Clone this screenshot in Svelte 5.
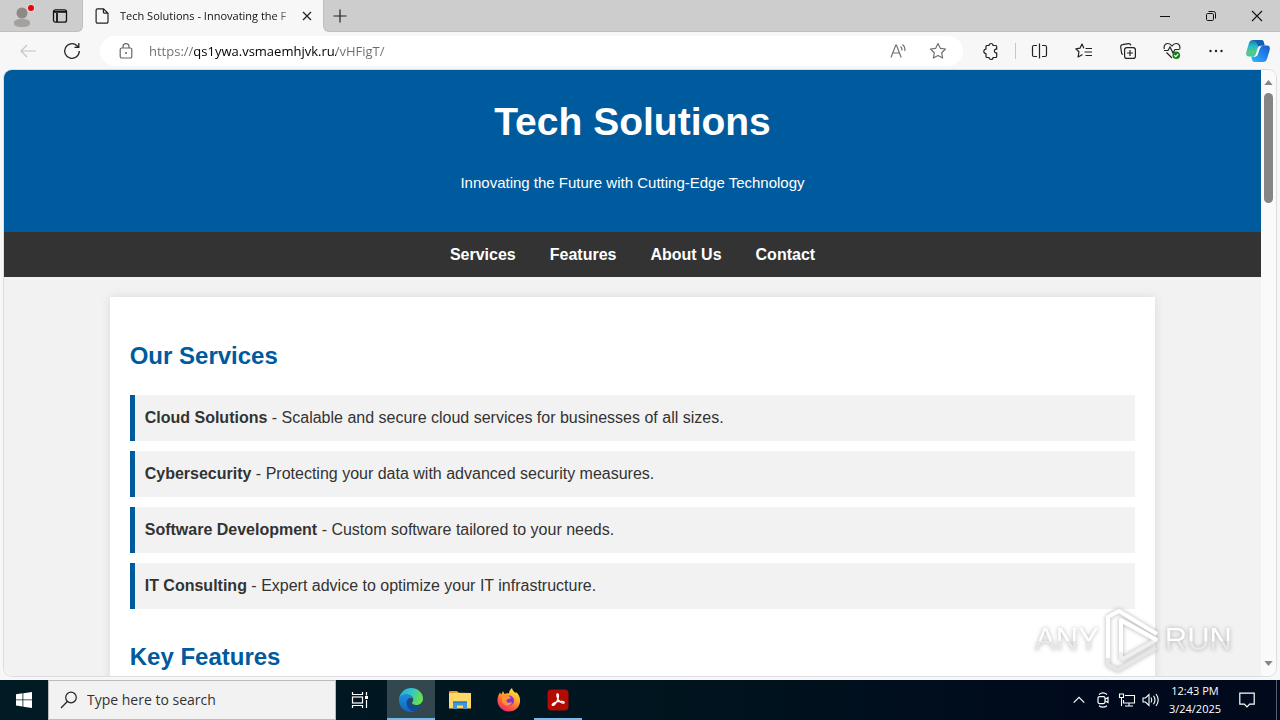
<script>
  const services = [
    { name: 'Cloud Solutions', text: 'Scalable and secure cloud services for businesses of all sizes.' },
    { name: 'Cybersecurity', text: 'Protecting your data with advanced security measures.' },
    { name: 'Software Development', text: 'Custom software tailored to your needs.' },
    { name: 'IT Consulting', text: 'Expert advice to optimize your IT infrastructure.' }
  ];
  const links = ['Services', 'Features', 'About Us', 'Contact'];
  let address = $state('https://qs1ywa.vsmaemhjvk.ru/vHFigT/');
  let query = $state('');
</script>

<div class="desktop">
  <div class="titlebar">
    <div class="lead">
      <button class="tool" aria-label="Profile">
        <svg width="24" height="24" viewBox="0 0 24 24">
          <circle cx="12" cy="9" r="5.5" fill="#8d8985" />
          <path d="M4 19c0-3 3-4 8-4s8 1 8 4-3 4-8 4-8-1-8-4z" fill="#a3a09d" />
          <circle cx="21" cy="4" r="4" fill="#e3d5d5" />
          <circle cx="21" cy="4" r="3" fill="#e0060f" />
        </svg>
      </button>
      <button class="tool" aria-label="Tab actions">
        <svg width="16" height="16" viewBox="0 0 16 16" fill="none" stroke="#111" stroke-width="1.3">
          <rect x="1.5" y="1.8" width="13" height="12.4" rx="2" />
          <path d="M1.5 3.8h13M5 5v9" stroke-width="1.8" />
        </svg>
      </button>
    </div>
    <div class="tab">
      <svg width="14" height="16" viewBox="0 0 14 16" fill="none" stroke="#222" stroke-width="1.2">
        <path d="M2.5 .8h6L13 5.2v8.6a1.4 1.4 0 0 1-1.4 1.4H2.5A1.4 1.4 0 0 1 1.1 13.8V2.2A1.4 1.4 0 0 1 2.5 .8zM8.4 .8v3.2a1.2 1.2 0 0 0 1.2 1.2H13" />
      </svg>
      <span class="tab-title">Tech Solutions - Innovating the F</span>
      <button class="close" aria-label="Close tab">
        <svg width="10" height="10" viewBox="0 0 10 10" stroke="#222" stroke-width="1.3"><path d="M1 1l8 8M9 1L1 9" /></svg>
      </button>
    </div>
    <div class="strip">
      <button class="newtab" aria-label="New tab">
        <svg width="14" height="14" viewBox="0 0 14 14" stroke="#222" stroke-width="1.2"><path d="M7 .5v13M.5 7h13" /></svg>
      </button>
      <div class="window-controls">
        <button aria-label="Minimize"><svg width="10" height="10" viewBox="0 0 10 10" stroke="#111"><path d="M0 5.5h10" /></svg></button>
        <button aria-label="Restore">
          <svg width="10" height="10" viewBox="0 0 10 10" fill="none" stroke="#111"><rect x=".5" y="2.5" width="7" height="7" rx="1.2" /><path d="M2.5 .5h5a2 2 0 0 1 2 2v5" /></svg>
        </button>
        <button aria-label="Close"><svg width="10" height="10" viewBox="0 0 10 10" stroke="#111" stroke-width="1.1"><path d="M0 0l10 10M10 0L0 10" /></svg></button>
      </div>
    </div>
  </div>

  <div class="toolbar">
    <button class="nav-button" aria-label="Back">
      <svg width="16" height="14" viewBox="0 0 16 14" fill="none" stroke="#c4c4c4" stroke-width="1.2"><path d="M16 7H1M7 1L1 7l6 6" /></svg>
    </button>
    <button class="nav-button" aria-label="Refresh">
      <svg width="18" height="18" viewBox="0 0 18 18" fill="none" stroke="#222" stroke-width="1.3"><path d="M16.3 9a7.3 7.3 0 1 1-2.3-5.3l1.6 1.7M11.5 5.4h4.300V1" /></svg>
    </button>
    <div class="address">
      <svg width="14" height="16" viewBox="0 0 14 16" fill="none" stroke="#666" stroke-width="1.2">
        <rect x="1.2" y="5" width="11.6" height="10" rx="1.6" /><path d="M4 5V3.6a3 3 0 0 1 6 0V5" /><circle cx="7" cy="10" r="1" fill="#666" stroke="none" />
      </svg>
      <input class="url" type="text" aria-label="Address" spellcheck="false" bind:value={address} />
      <button aria-label="Read aloud">
        <svg width="18" height="16" viewBox="0 0 18 16" fill="none" stroke="#707070" stroke-width="1.2"><path d="M1 14.5L5.800 2h.6l4.800 12.500M2.800 10h6.600M10.500 3.500q1.800 1.300 1.500 4M12.500 1.500q3 2.500 2.300 6.500" /></svg>
      </button>
      <button aria-label="Add to favorites">
        <svg width="18" height="18" viewBox="0 0 18 18" fill="none" stroke="#707070" stroke-width="1.2" stroke-linejoin="round"><path d="M9 1.500l2.300 4.800 5.200.7-3.800 3.700.9 5.300L9 13.500 4.400 16l.9-5.300L1.500 7l5.200-.7z" /></svg>
      </button>
    </div>
    <button class="nav-button" aria-label="Extensions">
      <svg width="16" height="16" viewBox="0 0 16 16" fill="none" stroke="#222" stroke-width="1.200" stroke-linejoin="round"><path d="M4 2.500h2a2 2 0 0 1 4 0h2.700a1 1 0 0 1 1 1V6.200h-.9a1.900 1.900 0 0 0 0 3.700h.9v3.600a1 1 0 0 1-1 1H10a2 2 0 0 1-4 0H4a1 1 0 0 1-1-1V10.500a2.200 2.200 0 0 1 0-4.400V3.500a1 1 0 0 1 1-1z" /></svg>
    </button>
    <span class="divider"></span>
    <button class="nav-button" aria-label="Split screen">
      <svg width="16" height="16" viewBox="0 0 16 16" fill="none" stroke="#222" stroke-width="1.200"><path d="M7.500 .5v15M5 2.500H2A1.500 1.500 0 0 0 .5 4v8A1.500 1.500 0 0 0 2 13.500h3M10 2.500h3A1.500 1.500 0 0 1 14.500 4v8a1.500 1.500 0 0 1-1.500 1.500h-3" /></svg>
    </button>
    <button class="nav-button" aria-label="Favorites">
      <svg width="18" height="16" viewBox="0 0 18 16" fill="none" stroke="#222" stroke-width="1.200" stroke-linejoin="round"><path d="M10.500 5.500H17M8.900 5.200L7 1 5 5.200l-4.200.6 3.100 3-.8 5.200 4.400-2.500M9.500 9H17M10.500 12.500H17" /></svg>
    </button>
    <button class="nav-button" aria-label="Collections">
      <svg width="16" height="16" viewBox="0 0 16 16" fill="none" stroke="#222" stroke-width="1.200"><rect x="4.600" y="4.600" width="10.800" height="10.800" rx="2.200" /><path d="M10 7v6M7 10h6M3 11.500A2 2 0 0 1 1.500 9.500L.7 4A2 2 0 0 1 2.500 1.700L8.500.7a2 2 0 0 1 2.300 1.700" /></svg>
    </button>
    <button class="nav-button" aria-label="Browser essentials">
      <svg width="18" height="18" viewBox="0 0 18 18" fill="none" stroke="#222" stroke-width="1.200"><path d="M1.300 7C.4 4 2 1.700 4.500 1.500 6.500 1.400 8 2.500 9 4c1-1.500 2.500-2.600 4.500-2.500C16 1.700 17.600 4 16.700 7M3.500 10.500L9 16M1 8.500h4L7 5l3 6 2-3.500h4.500" /><circle cx="13.300" cy="13.200" r="3.800" fill="#148014" stroke="none" /><path d="M11.300 13.300l1.500 1.300 2.500-2.800" stroke="#fff" /></svg>
    </button>
    <button class="nav-button" aria-label="Settings and more">
      <svg width="14" height="4" viewBox="0 0 14 4" fill="#222"><circle cx="1.500" cy="2" r="1.200" /><circle cx="7" cy="2" r="1.200" /><circle cx="12.500" cy="2" r="1.200" /></svg>
    </button>
    <button class="copilot" aria-label="Copilot">
      <svg width="24" height="22" viewBox="0 0 24 22">
        <defs>
          <linearGradient id="cpA" x1="0" y1="0" x2="0" y2="1"><stop offset="0" stop-color="#0f7ba0" /><stop offset=".35" stop-color="#26b5d0" /><stop offset=".75" stop-color="#56cd82" /><stop offset="1" stop-color="#3fc6a5" /></linearGradient>
          <linearGradient id="cpB" x1="1" y1="0" x2="0" y2="1"><stop offset="0" stop-color="#1b57c9" /><stop offset=".5" stop-color="#2387ee" /><stop offset="1" stop-color="#34b7f1" /></linearGradient>
        </defs>
        <path d="M7 0h8c2 0 2.500 1 3 3l.6 2.500H15c-2 0-2.600 1-3.200 3L10 14c-.6 1.800-1.500 2.500-3.500 2.500H3C.6 16.500-.4 14.500.3 12L3 3C3.700 1 5 0 7 0z" fill="url(#cpA)" />
        <path d="M17 22H9c-2 0-2.700-1-3.200-3l-.5-2.500H8c2 0 3-.6 3.600-2.500L13.500 8c.6-1.800 1.500-2.500 3.500-2.500h4c2.400 0 3.400 2 2.700 4.500L21 19c-.7 2-2 3-4 3z" fill="url(#cpB)" />
        <path d="M7 0h8c2 0 2.500 1 3 3l.6 2.500H15c-1.500 0-2.200.6-2.700 1.500C11 3 10 1 7 0z" fill="#145fb5" />
        <path d="M12.800 6.500h3.400c-1.400.4-2 1.200-2.500 2.500l-1.700 5c-.5 1.500-1.200 2.200-2.600 2.500H7.200c1.500-.3 2.300-1 2.800-2.500l1.800-5.500c.3-.9.600-1.500 1-2z" fill="#f7f7f7" />
      </svg>
    </button>
  </div>

  <div class="viewport">
    <div class="page">
      <header>
        <h1>Tech Solutions</h1>
        <p>Innovating the Future with Cutting-Edge Technology</p>
      </header>
      <nav>
        {#each links as link}
          <a href="#{link.toLowerCase().replace(' ', '-')}">{link}</a>
        {/each}
      </nav>
      <main>
        <section>
          <h2>Our Services</h2>
          <ul>
            {#each services as service}
              <li><strong>{service.name}</strong> - {service.text}</li>
            {/each}
          </ul>
        </section>
        <section>
          <h2>Key Features</h2>
        </section>
      </main>
    </div>
    <div class="scrollbar">
      <svg width="9" height="5" viewBox="0 0 10 6" fill="#858585"><path d="M5 0l5 6H0z" /></svg>
      <div class="thumb"></div>
      <svg width="9" height="5" viewBox="0 0 10 6" fill="#858585"><path d="M5 6l5-6H0z" /></svg>
    </div>
  </div>

  <div class="taskbar">
    <button class="start" aria-label="Start">
      <svg width="16" height="16" viewBox="0 0 16 16" fill="#fff"><path d="M0 2.200l6.500-.9v6.200H0zM7.300 1.200L16 0v7.500H7.300zM0 8.300h6.500v6.200L0 13.600zM7.300 8.300H16V16l-8.700-1.300z" /></svg>
    </button>
    <label class="search">
      <svg width="18" height="18" viewBox="0 0 18 18" fill="none" stroke="#222" stroke-width="1.200"><circle cx="11" cy="6.500" r="5.300" /><path d="M7.300 10.500L1 17" /></svg>
      <input type="text" placeholder="Type here to search" aria-label="Search" bind:value={query} />
    </label>
    <button class="app taskview" aria-label="Task view">
      <svg width="18" height="16" viewBox="0 0 18 16" fill="none" stroke="#fff" stroke-width="1.200"><path d="M1.500 0v2.500h10V0M1.500 16v-2.500h10V16M15.500 0v3.500M15.500 8v8" /><rect x="1.500" y="5" width="10" height="6" /><rect x="14" y="4" width="3" height="3" fill="#fff" stroke="none" /></svg>
    </button>
    <button class="app running active" aria-label="Microsoft Edge">
      <svg width="24" height="24" viewBox="0 0 24 24">
        <defs>
          <linearGradient id="edA" x1="0" y1="0" x2="1" y2=".3"><stop offset="0" stop-color="#2aa4e0" /><stop offset=".5" stop-color="#30c5cf" /><stop offset="1" stop-color="#66e052" /></linearGradient>
          <linearGradient id="edB" x1="0" y1="0" x2="0" y2="1"><stop offset="0" stop-color="#1c8fdc" /><stop offset="1" stop-color="#1266bd" /></linearGradient>
        </defs>
        <path d="M0 11C1 4.500 6 0 12 0c7 0 12 5 12 10.500 0 4-3 6.500-6.500 6.500-3 0-4.500-1.300-4.500-2.200 0-.7 1.300-1.300 1.300-3.300C14.300 8.500 11 6.500 7.500 6.500 4 6.500 1.200 8 0 11z" fill="url(#edA)" />
        <path d="M0 12c0-3.500 3.500-5.700 7.500-5.700 4 0 6.500 2.200 6.800 4.700-1-1-2-1.200-3-1C8.500 10.500 7.500 13 8 16c.7 4 4 7 8 7-1.200.7-2.500 1-4 1C5 24 0 18.500 0 12z" fill="url(#edB)" />
        <path d="M11.300 10c-3 .5-4.300 3.500-3.300 7 1.200 4.500 5 6.500 8 6 2.500-1 4.500-2.500 6-5 .3-.6-.2-.8-.7-.6-1.300.6-2.500.8-4 .8-4.500 0-7-2.500-7-5 0-1.300.4-2.300 1-3.200z" fill="#124b93" />
      </svg>
    </button>
    <button class="app" aria-label="File Explorer">
      <svg width="22" height="18" viewBox="0 0 22 18"><path d="M0 1a1 1 0 0 1 1-1h7l2 2H0z" fill="#e59b1d" /><path d="M0 2l10-.2L22 2v15.500H0z" fill="#ffd868" /><path d="M4 10.500h14V18h-4v-3.500H8V18H4z" fill="#3d9ad8" /><path d="M4 10.500h14V12H4z" fill="#2581bd" /></svg>
    </button>
    <button class="app" aria-label="Firefox">
      <svg width="24" height="24" viewBox="0 0 24 24">
        <defs><linearGradient id="ffA" x1=".8" y1="0" x2=".25" y2="1"><stop offset="0" stop-color="#fff04a" /><stop offset=".4" stop-color="#ffa62b" /><stop offset=".7" stop-color="#ff5a3c" /><stop offset="1" stop-color="#e5267b" /></linearGradient></defs>
        <path d="M3 4.500l1.200 2L6 3l1.500 3c1.500-.8 3-.8 4.500-.5C12 3.500 13 1.500 15 0c.5 2.500 2 3.500 3.500 5L19 4c3 2.500 4.500 6 4 10-.7 5.500-5.200 9.500-11 9.500C5.500 23.500.5 18.500.5 12.500c0-3 .8-6 2.500-8z" fill="url(#ffA)" />
        <circle cx="12" cy="12.500" r="5" fill="#8034d5" />
        <path d="M5 8c2-1.500 4-1.500 6-.5l3 2c-1 1.500-3 1.300-4 2-1 1-.5 2.500.7 3 2 .8 3-.6 4.300 0-1 2.300-3.500 3.500-6 2.800C6 16.500 4 13 5 8z" fill="#ff9430" />
      </svg>
    </button>
    <button class="app running" aria-label="Adobe Acrobat">
      <svg width="22" height="22" viewBox="0 0 22 22"><rect x=".5" y=".5" width="21" height="21" rx="4" fill="#b30b00" /><path d="M10.500 5c1.500 0 1 3.500.2 5.500C9.500 13.500 7 17 5.500 16.300c-1.300-1 2-3 5.200-3.600 3-.6 6.500-.7 6.500.8 0 1.400-3 .5-5-1.500C10.500 10.300 9 5 10.500 5z" fill="none" stroke="#fff" stroke-width="1.300" /></svg>
    </button>
    <div class="tray">
      <button aria-label="Show hidden icons"><svg width="12" height="8" viewBox="0 0 12 8" fill="none" stroke="#fff" stroke-width="1.200"><path d="M.7 6.700L6 1.400l5.300 5.300" /></svg></button>
      <button aria-label="Meet now"><svg width="14" height="16" viewBox="0 0 14 16" fill="none" stroke="#fff" stroke-width="1.200"><rect x="2" y="4.600" width="7" height="7" rx="1.500" /><path d="M9 7.200l3-1.700v5L9 9M3 2.400Q7-.6 11 2.400M3 13.700Q7 16.700 11 13.700" /></svg></button>
      <button aria-label="Network"><svg width="16" height="14" viewBox="0 0 16 14" fill="none" stroke="#fff" stroke-width="1.100"><path d="M6 2.500h9.500v7.500H4.500V7M10 10v3M6 13h8M.5 1h4v3.500h-4zM2.500 4.500V13" /></svg></button>
      <button aria-label="Volume"><svg width="18" height="14" viewBox="0 0 18 14" fill="none" stroke="#fff" stroke-width="1.100"><path d="M1 5h2.500L7 1.500v11L3.500 9H1zM9 4.500q1.600 2.500 0 5M11.500 2.800q3 4.200 0 8.400M14 1q4.400 6 0 12" /></svg></button>
      <button class="clock"><span>12:43 PM</span><span>3/24/2025</span></button>
      <button class="notices" aria-label="Notifications"><svg width="16" height="16" viewBox="0 0 16 16" fill="none" stroke="#fff" stroke-width="1.200"><path d="M.8 1.200h14.400v11h-4.500L8 15l-2.700-2.800H.8z" /></svg></button>
      <span class="show-desktop"></span>
    </div>
  </div>

  <div class="watermark">
    <span>ANY</span>
    <svg width="58" height="64" viewBox="0 0 58 64" fill="none" stroke-width="4" stroke-linejoin="round">
      <path d="M5 48v9l10 5 38-22" stroke="#e6e6e6" />
      <path d="M18 52V13l35 19-35 20" stroke="#efefef" />
      <path d="M5 50V9l11-6 38 23M18 44V12l36 20" stroke="#fff" />
    </svg>
    <span>RUN</span>
  </div>
</div>

<style>
  :global(body) { margin: 0; }
  * { box-sizing: border-box; }
  button { display: flex; align-items: center; justify-content: center; border: 0; padding: 0; background: none; font: inherit; color: inherit; }
  input { border: 0; padding: 0; outline: 0; background: none; font: inherit; min-width: 0; }
  svg { flex: none; display: block; overflow: visible; }

  .desktop { position: relative; display: flex; flex-direction: column; height: 100vh; overflow: hidden; background: #f7f7f7; font-family: "Open Sans", "Noto Sans", sans-serif; }

  .titlebar { display: flex; flex: none; height: 32px; background: #f7f7f7; }
  .lead { display: flex; align-items: center; width: 83px; padding-left: 3px; background: #cdcdcd; border-bottom-right-radius: 6px; border-right: 1px solid #bfbfbf; border-bottom: 1px solid #bfbfbf; }
  .tool { width: 38px; height: 28px; }
  .tab { display: flex; align-items: center; width: 240px; padding: 0 8px 0 12px; gap: 11px; }
  .tab-title { flex: 1; white-space: nowrap; font-size: 11px; line-height: 16px; color: #111; mask-image: linear-gradient(to right, #000 90%, transparent 104%); }
  .close { width: 16px; height: 16px; }
  .tab .close { margin-left: -4px; }
  .strip { display: flex; flex: 1; justify-content: space-between; background: #cdcdcd; border-bottom-left-radius: 6px; border-left: 1px solid #bfbfbf; border-bottom: 1px solid #bfbfbf; }
  .newtab { width: 32px; }
  .window-controls { display: flex; }
  .window-controls button { width: 46px; }

  .toolbar { display: flex; flex: none; align-items: center; height: 38px; padding: 0 2px 0 6px; }
  .nav-button { width: 44px; height: 30px; }
  .address { display: flex; flex: 1; align-items: center; height: 30px; margin: 0 6px; padding: 0 6px 0 19px; border-radius: 15px; background: #fff; }
  .address button { width: 39px; height: 30px; }
  .url { flex: 1; margin-left: 16px; font-size: 13px; line-height: 20px; color: transparent; background: linear-gradient(to right, #6c6c6c 44px, #000 44px, #000 187px, #6c6c6c 187px); background-clip: text; -webkit-background-clip: text; }
  .divider { width: 1px; height: 16px; margin: 0 2px; background: #c6c6c6; }
  .copilot { width: 40px; height: 30px; }

  .viewport { display: flex; flex: 1; min-height: 0; margin: 0 4px 4px; border-radius: 8px; overflow: hidden; background: #fafafa; box-shadow: 0 0 0 1px #dedee2; }
  .page { flex: 1; min-width: 0; overflow: hidden; background: #f2f2f2; color: #333; font-family: "Liberation Sans", Arial, sans-serif; font-size: 16px; line-height: 26px; }
  header { padding: 20px; background: #005a9e; color: #fff; text-align: center; }
  h1 { margin: 0; font-size: 39px; line-height: 64px; }
  p { margin: 16px 0; font-size: 15px; }
  nav { display: flex; justify-content: center; gap: 34px; padding: 10px; background: #333; line-height: 25px; }
  nav a { color: #fff; font-weight: bold; text-decoration: none; }
  main { box-sizing: content-box; width: 80%; margin: 20px auto; padding: 20px; background: #fff; box-shadow: 0 0 10px rgba(0, 0, 0, 0.1); }
  h2 { margin: 20px 0; font-size: 24px; line-height: 38px; color: #005a9e; }
  ul { display: flex; flex-direction: column; gap: 10px; margin: 0 0 29px; padding: 0; list-style: none; }
  li { padding: 10px; background: #f2f2f2; border-left: 5px solid #005a9e; }

  .scrollbar { display: flex; flex-direction: column; align-items: center; width: 15px; padding: 10px 0; gap: 8px; background: #fafafa; }
  .thumb { width: 9px; height: 110px; margin-bottom: auto; border-radius: 5px; background: #858585; }

  .taskbar { display: flex; flex: none; height: 40px; background: linear-gradient(to right, #001b24, #00151f 50%, #000a1c 85%); color: #fff; }
  .start { width: 48px; }
  .search { display: flex; align-items: center; width: 288px; padding: 0 12px 0 11px; gap: 9px; background: #f2f2f2; border: 1px solid #bababa; }
  .search input { flex: 1; font-size: 14px; line-height: 20px; color: #222; }
  .search input::placeholder { color: #333; opacity: 1; }
  .app { width: 48px; margin-right: 1px; border-top: 2px solid transparent; border-bottom: 2px solid transparent; }
  .taskview { margin-right: 3px; }
  .running { border-bottom-color: #76b9ed; }
  .active { background: #33474f; border-top-color: #33474f; }
  .tray { display: flex; margin-left: auto; font-size: 11px; line-height: 18px; }
  .tray button { width: 24px; }
  .tray .clock { flex-direction: column; width: 60px; padding-left: 4px; white-space: nowrap; }
  .tray .notices { width: 48px; margin-right: 5px; }
  .show-desktop { width: 4px; border-left: 1px solid #586070; }

  .watermark { position: absolute; right: 48px; bottom: 48px; display: flex; align-items: center; gap: 4px; font-family: "Liberation Sans", sans-serif; font-size: 31px; line-height: 64px; filter: drop-shadow(0 0 2px rgba(0, 0, 0, 0.3)); pointer-events: none; }
  .watermark span { color: transparent; background: linear-gradient(#fff 52%, #e8e8e8 52%); background-clip: text; -webkit-background-clip: text; }
</style>
